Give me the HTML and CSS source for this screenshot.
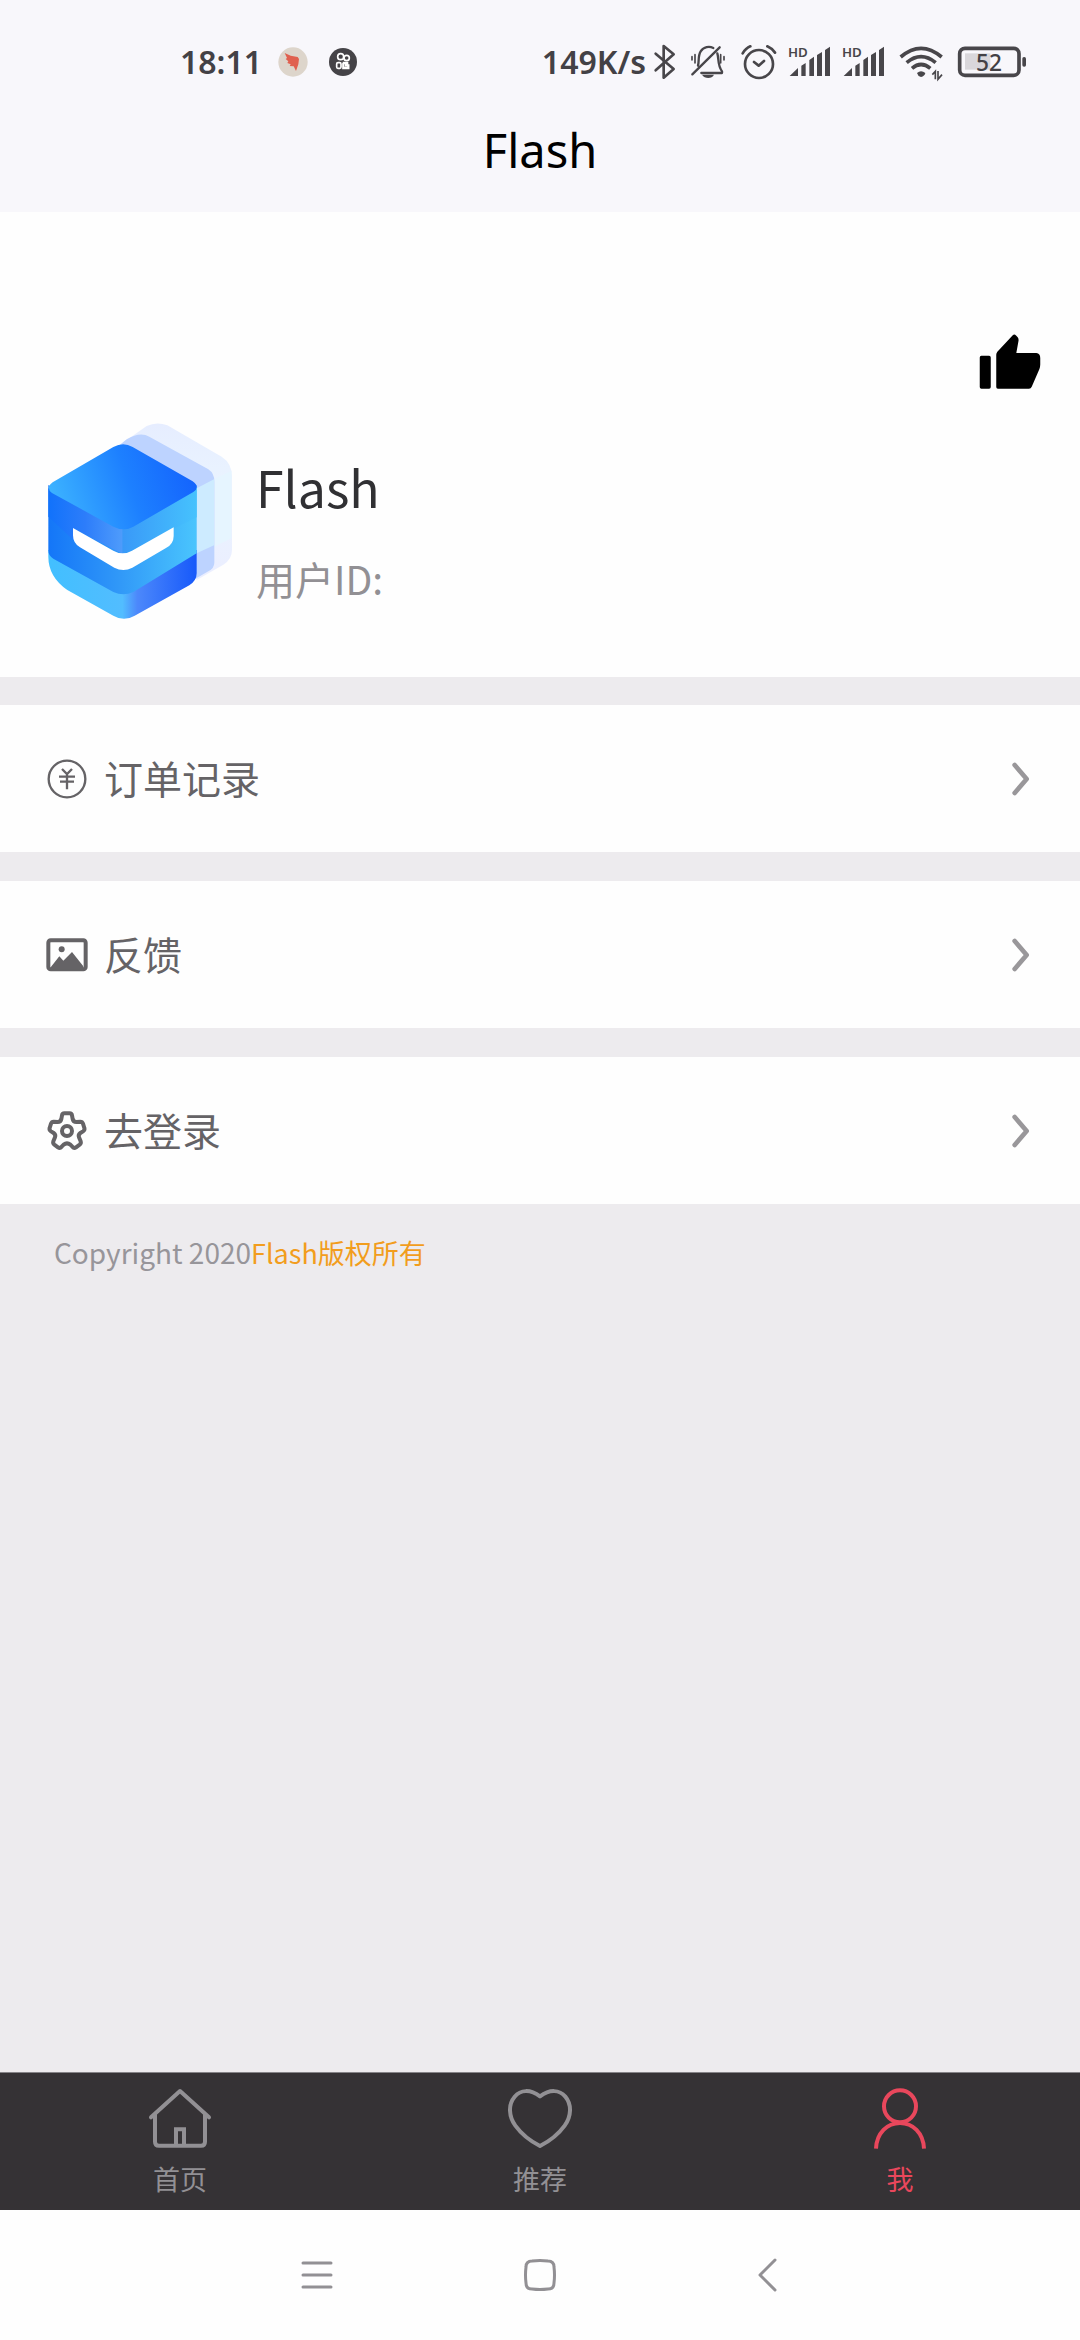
FILE: index.html
```html
<!DOCTYPE html>
<html lang="zh-CN">
<head>
<meta charset="utf-8">
<meta name="viewport" content="width=device-width, initial-scale=1">
<title>Flash</title>
<link rel="stylesheet" href="styles.css">
</head>
<body>
<div class="screen">
  <header class="header">
    <div class="status">
      <div class="status-left">
        <span class="clock">18:11</span>
        <svg class="app-icon" viewBox="0 0 90 90" aria-hidden="true"><circle cx="45" cy="45" r="44" fill="#ddd5cb"/><path d="M20 18L38 26L59 30L63 36L61 52L54 72L47 58L35 57L38 52L28 48L31 43L23 36L27 33Z" fill="#e0604f"/></svg>
        <svg class="app-icon" viewBox="0 0 90 90" aria-hidden="true"><circle cx="45" cy="45" r="42" fill="#454347"/><g fill="none" stroke="#fff" stroke-width="5"><circle cx="38" cy="29" r="9"/><circle cx="56" cy="33" r="8"/><rect x="26" y="47" width="13" height="17" rx="4"/><path d="M44 48h17M46 48v15h15v-8H51" stroke-width="7"/></g></svg>
      </div>
      <div class="status-right">
        <span class="speed">149K/s</span>
        <svg width="29" height="36" viewBox="372 42 87 108" aria-hidden="true"><path d="M377 71L431 117L401 143V48L431 73L377 121" fill="none" stroke="#48464a" stroke-width="8" stroke-linejoin="round" stroke-linecap="round"/></svg>
        <svg width="50" height="36" viewBox="459 42 150 108" aria-hidden="true"><g fill="none" stroke="#48464a" stroke-width="7" stroke-linecap="round" stroke-linejoin="round"><path d="M504 107C508 95 503 78 512 64C521 50 538 48 550 54M562 70C567 86 562 105 576 124V129H514M487 133L569 52"/><path d="M486 80V90M495 74V99M572 74V99M582 80V90" stroke-width="5"/></g><path d="M516 134H552C546 147 524 147 516 134Z" fill="#48464a"/></svg>
        <svg width="50" height="36" viewBox="609 42 150 108" aria-hidden="true"><g fill="none" stroke="#48464a" stroke-width="8" stroke-linecap="round" stroke-linejoin="round"><circle cx="687" cy="102" r="42"/><path d="M638 70C644 60 651 53 661 49M712 49C722 53 729 60 735 68M672 96L686 107L702 93"/></g></svg>
        <svg width="54" height="36" viewBox="9 42 162 108" aria-hidden="true"><text class="hd" x="24" y="80">HD</text><path d="M29 138L54 114V138ZM64 107L77 99V138H64ZM88 90L102 80V138H88ZM111 75L126 66V138H111ZM135 60L150 50V138H135Z" fill="#48464a"/></svg>
        <svg width="54" height="36" viewBox="9 42 162 108" aria-hidden="true"><text class="hd" x="24" y="80">HD</text><path d="M29 138L54 114V138ZM64 107L77 99V138H64ZM88 90L102 80V138H88ZM111 75L126 66V138H111ZM135 60L150 50V138H135Z" fill="#48464a"/></svg>
        <svg width="59" height="36" viewBox="333 42 177 108" aria-hidden="true"><g fill="none" stroke="#48464a" stroke-width="11"><path d="M362 81Q423 29 485 81M380 98Q423 62 467 98M396 115Q423 92 451 115"/><path d="M457 134L466 124V148M474 123V148L486 134" stroke-width="5"/></g><path d="M411 129Q423 119 436 129Q434 138 423 141Q413 138 411 129Z" fill="#48464a"/></svg>
        <svg width="78" height="36" viewBox="510 42 234 108" aria-hidden="true"><rect x="555" y="70" width="76" height="49" fill="#d9d7db"/><rect x="539" y="55" width="178" height="81" rx="16" fill="none" stroke="#48464a" stroke-width="11"/><rect x="727" y="81" width="11" height="29" rx="5" fill="#48464a"/><text class="battery" x="627" y="122" text-anchor="middle">52</text></svg>
      </div>
    </div>
    <h1 class="title">Flash</h1>
  </header>

  <main class="main">
    <section class="profile">
      <button class="like" type="button" aria-label="点赞"><svg width="66" height="66" viewBox="0 0 24 24"><path d="M1.6 9H4.4Q5 9 5 9.600V20.400Q5 21 4.400 21H1.600Q1 21 1 20.400V9.600Q1 9 1.600 9ZM7.600 21Q7 21 7 20.400V8.600Q7 8 7.400 7.500L13 1.500Q13.600 1 14.200 1.600L14.800 2.300Q15.200 2.800 15.100 3.500L14.300 8H21.600Q23 8.200 23 9.800V12.200Q23 13 22.700 13.800L19.900 20.300Q19.600 21 18.900 21Z"/></svg></button>
      <div class="user">
        <svg class="logo" viewBox="48 36 564 600" aria-hidden="true">
          <defs>
            <linearGradient id="top" x1="0" y1=".6" x2="1" y2=".4"><stop offset="0" stop-color="#3db4ff"/><stop offset=".55" stop-color="#1d80ff"/><stop offset="1" stop-color="#1463fd"/></linearGradient>
            <linearGradient id="left"><stop offset="0" stop-color="#1172fb"/><stop offset=".5" stop-color="#2d7dfa"/><stop offset="1" stop-color="#4f9cfb"/></linearGradient>
            <linearGradient id="right"><stop offset="0" stop-color="#3999f8"/><stop offset="1" stop-color="#46c2fd"/></linearGradient>
            <linearGradient id="band"><stop offset="0" stop-color="#1476f8"/><stop offset=".5" stop-color="#329af8"/><stop offset="1" stop-color="#4ac5fd"/></linearGradient>
            <linearGradient id="base"><stop offset="0" stop-color="#42bfff"/><stop offset=".5" stop-color="#52bdff"/><stop offset=".6" stop-color="#4c88fb"/><stop offset="1" stop-color="#1759fa"/></linearGradient>
            <linearGradient id="far" x1="0" y1="0" x2="0" y2="1"><stop offset="0" stop-color="#e6edff"/><stop offset=".4" stop-color="#eaf4ff"/><stop offset="1" stop-color="#ebeeff"/></linearGradient>
          </defs>
          <path d="M350 48Q380 34 412 46L575 140Q606 160 606 200V420Q606 448 580 464L500 510L270 104Z" fill="url(#far)"/>
          <path d="M552 208L604 182V385L552 410Z" fill="#e6f5ff"/>
          <path d="M290 88Q330 64 358 80L535 178Q553 190 553 214V458Q553 474 535 484L490 510L270 104Z" fill="#bdd3ff"/>
          <path d="M500 235L552 208V406L500 430Z" fill="#cdebff"/>
          <path d="M55 420L500 420V490Q500 512 478 526L314 617Q282 636 250 617L112 540Q55 500 55 440Z" fill="url(#base)"/>
          <path d="M55 225L278 350L500 225V430L310 546Q280 560 250 546L70 446Q55 438 55 420Z" fill="url(#band)"/>
          <path d="M55 235L278 350V432L130 355V390L55 320Z" fill="url(#left)"/>
          <path d="M278 350L500 235V322L278 432Z" fill="url(#right)"/>
          <path d="M129 354L250 422Q278 438 306 422L431 352V378Q431 402 408 414L307 473Q280 487 253 473L150 412Q129 400 129 376Z" fill="#fff"/>
          <path d="M68 217L250 111Q280 94 308 111L488 214Q512 231 490 246L310 350Q282 366 250 350L66 249Q46 233 68 217Z" fill="url(#top)"/>
        </svg>
        <div class="user-text">
          <h2 class="name">Flash</h2>
          <p class="uid">用户ID:</p>
        </div>
      </div>
    </section>

    <nav class="menu" aria-label="菜单">
      <a class="row" href="#orders">
        <svg class="row-icon" viewBox="0 0 126 126" aria-hidden="true"><g fill="none" stroke="#656366" stroke-width="7"><circle cx="63" cy="63" r="55"/><path d="M48 33L63 48L78 33M63 48V94M39 56H87M42 71H84"/></g></svg>
        <span class="label">订单记录</span>
        <svg class="chevron" viewBox="0 0 54 102" aria-hidden="true"><path d="M8 9L44 51L8 93"/></svg>
      </a>
      <a class="row" href="#feedback">
        <svg class="row-icon" viewBox="0 0 126 126" aria-hidden="true"><rect x="7" y="19" width="112" height="87" rx="7" fill="none" stroke="#656366" stroke-width="12"/><circle cx="47" cy="46" r="9" fill="#656366"/><path d="M14 100L40 67L52 80L78 54L112 97V106H14Z" fill="#656366"/></svg>
        <span class="label">反馈</span>
        <svg class="chevron" viewBox="0 0 54 102" aria-hidden="true"><path d="M8 9L44 51L8 93"/></svg>
      </a>
      <a class="row" href="#login">
        <svg class="row-icon" viewBox="0 0 126 126" aria-hidden="true"><g fill="none" stroke="#656366" stroke-width="12" stroke-linejoin="round"><path d="M48 16Q49 10 55 10H71Q77 10 78 16L80 27Q82 36 91 36L103 35Q109 35 111 41L115 54Q117 60 111 64L103 69Q96 74 99 82L104 94Q106 100 101 104L90 112Q84 116 79 110L73 104Q63 96 53 104L47 110Q42 116 36 112L25 104Q20 100 22 94L27 82Q30 74 23 69L15 64Q9 60 11 54L15 41Q17 35 23 35L35 36Q44 36 46 27Z"/><circle cx="63" cy="63" r="15"/></g></svg>
        <span class="label">去登录</span>
        <svg class="chevron" viewBox="0 0 54 102" aria-hidden="true"><path d="M8 9L44 51L8 93"/></svg>
      </a>
    </nav>

    <p class="copyright">Copyright 2020<span class="brand">Flash版权所有</span></p>
  </main>

  <nav class="tabs" aria-label="主导航">
    <a class="tab" href="#home">
      <svg class="tab-icon" viewBox="0 0 192 180" aria-hidden="true"><g fill="none" stroke="#929094" stroke-width="12" stroke-linecap="round" stroke-linejoin="round"><path d="M9 85L96 6L183 85M21 75V158Q21 170 33 170H159Q171 170 171 158V75"/><path d="M84 166V121H108V166" stroke-linejoin="miter"/></g></svg>
      <span>首页</span>
    </a>
    <a class="tab" href="#recommend">
      <svg class="tab-icon" viewBox="0 0 192 180" aria-hidden="true"><path d="M96 22C126 0 154 2 172 23C192 47 190 82 170 110C151 136 124 157 96 171C68 157 41 136 22 110C2 82 0 47 20 23C38 2 66 0 96 22Z" fill="none" stroke="#929094" stroke-width="12" stroke-linejoin="round"/></svg>
      <span>推荐</span>
    </a>
    <a class="tab tab-active" href="#me" aria-current="page">
      <svg class="tab-icon" viewBox="0 0 192 180" aria-hidden="true"><g fill="none" stroke="#e9475c" stroke-width="12"><circle cx="96" cy="52" r="48"/><path d="M24 179C26 132 58 102 96 102S166 132 168 179"/></g></svg>
      <span>我</span>
    </a>
  </nav>

  <div class="system">
    <button class="key" type="button" aria-label="最近任务"><svg viewBox="0 0 36 36"><path d="M4 6H32M4 18H32M4 30H32"/></svg></button>
    <button class="key" type="button" aria-label="主屏幕"><svg viewBox="0 0 36 36"><path d="M10 4Q18 3 26 4Q32 4 32 10Q33 18 32 26Q32 32 26 32Q18 33 10 32Q4 32 4 26Q3 18 4 10Q4 4 10 4Z"/></svg></button>
    <button class="key" type="button" aria-label="返回"><svg viewBox="0 0 36 36"><path d="M30 3L15 18L30 33"/></svg></button>
  </div>
</div>
</body>
</html>
```
FILE: styles.css
```css
* {
  box-sizing: border-box;
}

body,
h1,
h2,
p {
  margin: 0;
  font-weight: 400;
}

body {
  font-family: "Noto Sans CJK SC", "Noto Sans", sans-serif;
  background: #edebee;
}

svg {
  display: block;
  flex: none;
  overflow: visible;
}

a {
  color: inherit;
  text-decoration: none;
}

button {
  padding: 0;
  border: 0;
  background: none;
}

.screen {
  display: flex;
  flex-direction: column;
  min-height: 100vh;
}

/* Status bar and title */
.header {
  height: 212px;
  background: #f8f7fb;
}

.status {
  display: flex;
  justify-content: space-between;
  height: 124px;
  padding: 0 52px 0 180px;
  font-family: "Noto Sans", sans-serif;
  color: #434145;
}

.status-left,
.status-right {
  display: flex;
  align-items: center;
}

.clock,
.speed {
  font-size: 32px;
  font-weight: 600;
  line-height: 40px;
}

.clock {
  margin-right: 16px;
}

.speed {
  margin-right: 8px;
}

.app-icon {
  width: 30px;
  height: 30px;
  margin-right: 20px;
}

.hd {
  font: 600 40px "Noto Sans", sans-serif;
  fill: #48464a;
}

.battery {
  font: 500 68px "Noto Sans", sans-serif;
  fill: #434145;
}

.title {
  font-family: "Noto Sans", sans-serif;
  font-size: 47px;
  line-height: 52px;
  text-align: center;
  color: #000;
}

/* Profile */
.main {
  flex: 1;
}

.profile {
  height: 465px;
  padding: 119px 37px 0 46px;
  background: #fefefe;
}

.like {
  display: block;
  margin-left: auto;
}

.user {
  display: flex;
  gap: 22px;
  margin-top: 25px;
}

.logo {
  width: 188px;
  height: 200px;
}

.user-text {
  padding-top: 28px;
}

.name {
  font-size: 50px;
  line-height: 72px;
  color: #303033;
}

.uid {
  margin-top: 28px;
  font-size: 39px;
  line-height: 56px;
  color: #929094;
}

/* Menu rows */
.menu {
  display: flex;
  flex-direction: column;
  gap: 29px;
  padding-top: 28px;
}

.row {
  display: flex;
  align-items: center;
  height: 147px;
  padding: 0 50px 0 46px;
  background: #fefefe;
}

.row-icon {
  width: 42px;
  height: 42px;
}

.label {
  flex: 1;
  margin-left: 16px;
  padding-bottom: 4px;
  font-size: 39px;
  line-height: 56px;
  color: #656366;
}

.chevron {
  width: 18px;
  height: 34px;
}

.chevron path {
  fill: none;
  stroke: #99979a;
  stroke-width: 14;
  stroke-linecap: round;
  stroke-linejoin: round;
}

.copyright {
  padding: 28px 54px;
  font-size: 28px;
  line-height: 40px;
  color: #97959a;
}

.brand {
  font-size: 27px;
  color: #f29d1d;
}

/* Tab bar */
.tabs {
  display: flex;
  height: 138px;
  border-top: 1px solid #858387;
  background: #353235;
}

.tab {
  display: flex;
  flex: 1;
  flex-direction: column;
  align-items: center;
  gap: 10px;
  padding-top: 16px;
  font-size: 27px;
  line-height: 40px;
  color: #929094;
}

.tab-active {
  color: #e9475c;
}

.tab-icon {
  width: 64px;
  height: 60px;
}

/* System navigation */
.system {
  display: flex;
  height: 130px;
  padding: 0 19%;
  background: #fefefe;
}

.key {
  display: flex;
  flex: 1;
  align-items: center;
  justify-content: center;
}

.key svg {
  width: 36px;
  height: 36px;
  fill: none;
  stroke: #929094;
  stroke-width: 3;
  stroke-linecap: round;
  stroke-linejoin: round;
}
```
